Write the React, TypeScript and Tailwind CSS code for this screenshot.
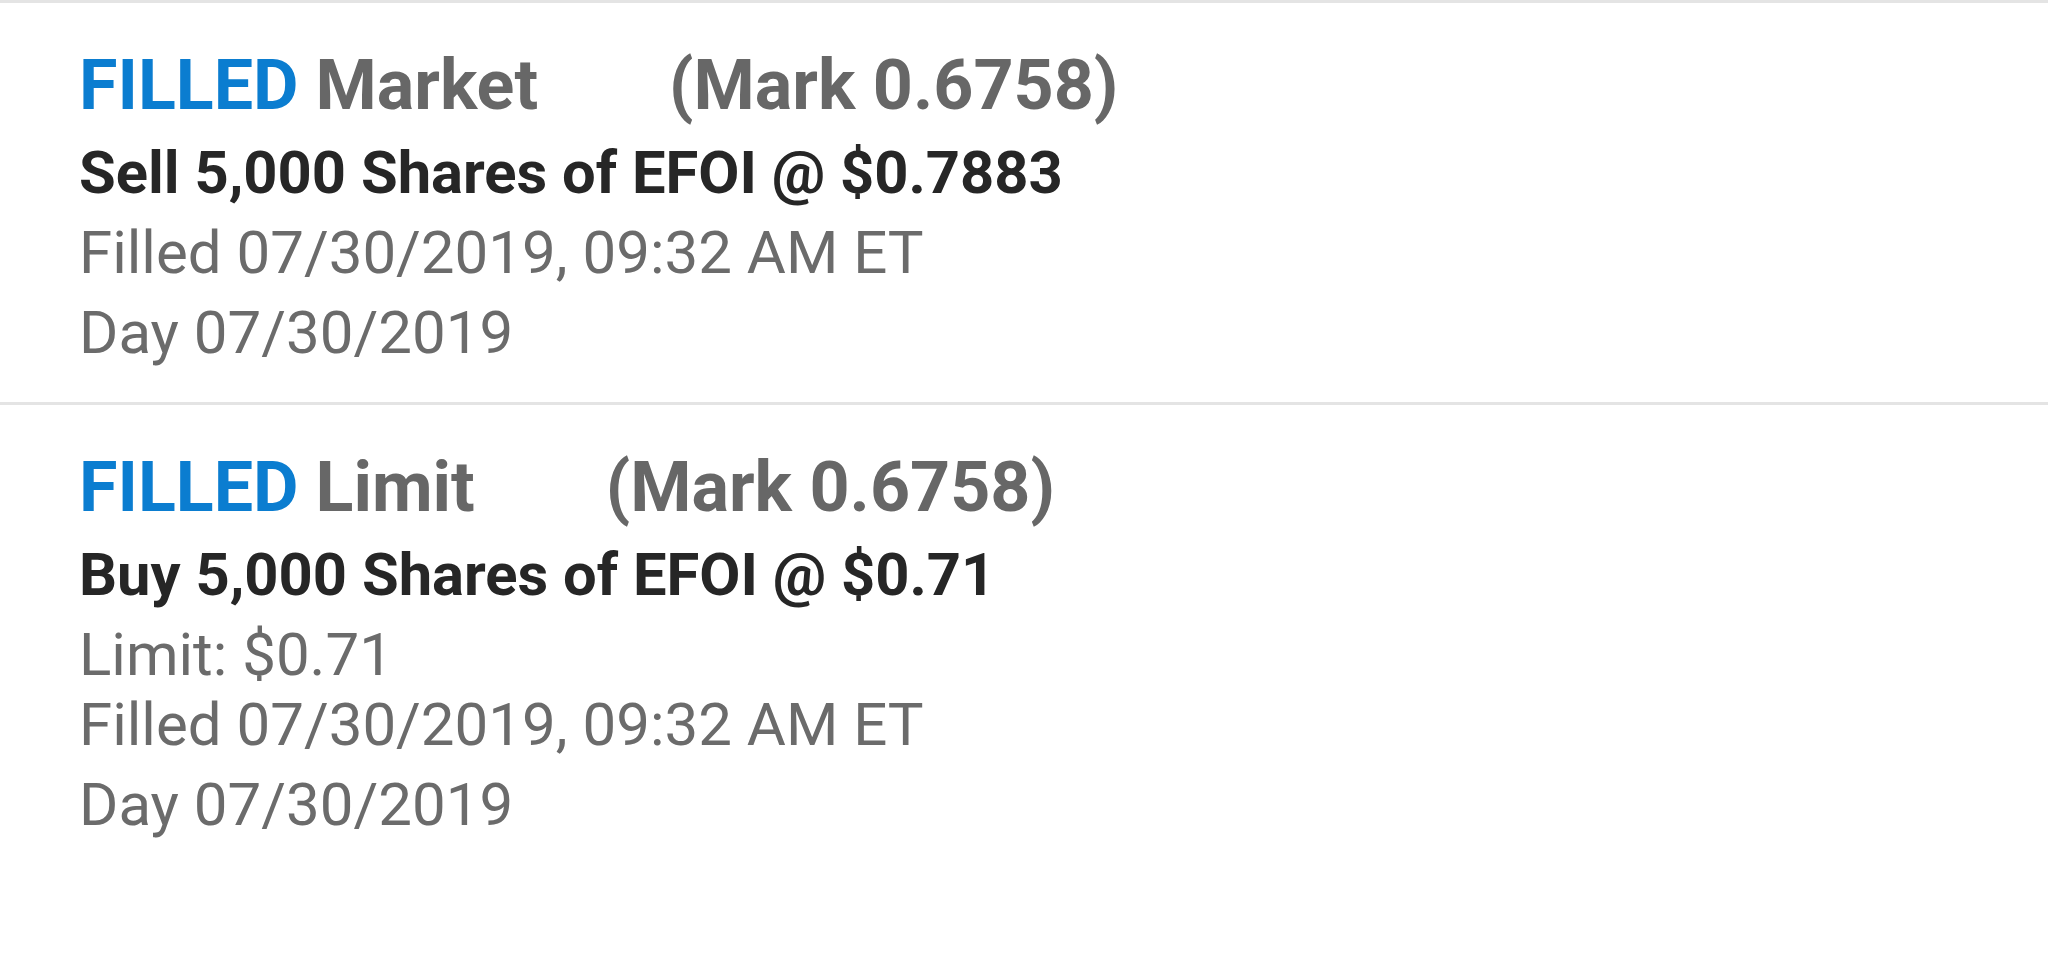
type Order = {
  type: string;
  mark: string;
  summary: string;
  limit?: string;
  filled: string;
  day: string;
};

const orders: Order[] = [
  {
    type: 'Market',
    mark: '0.6758',
    summary: 'Sell 5,000 Shares of EFOI @ $0.7883',
    filled: 'Filled 07/30/2019, 09:32 AM ET',
    day: 'Day 07/30/2019',
  },
  {
    type: 'Limit',
    mark: '0.6758',
    summary: 'Buy 5,000 Shares of EFOI @ $0.71',
    limit: 'Limit: $0.71',
    filled: 'Filled 07/30/2019, 09:32 AM ET',
    day: 'Day 07/30/2019',
  },
];

function OrderRow({ order }: { order: Order }) {
  return (
    <div className="border-t-[3px] border-[#e4e4e4] pl-[79px] pt-[42px] pb-[29px]">
      <div className="flex items-baseline text-[70px] leading-[80px] font-bold">
        <span className="text-[#0b7dd0]">FILLED</span>
        <span className="ml-[17px] text-[#676767]">{order.type}</span>
        <span className="ml-[131px] text-[#676767]">(Mark {order.mark})</span>
      </div>
      <div className="mt-[8px] text-[59.7px] leading-[80px] font-bold text-[#262626]">{order.summary}</div>
      {order.limit ? (
        <>
          <div className="mt-[5px] text-[60px] leading-[70px] text-[#6b6b6b]">
            <div>{order.limit}</div>
            <div>{order.filled}</div>
          </div>
          <div className="mt-[5px] text-[60px] leading-[80px] text-[#6b6b6b]">{order.day}</div>
        </>
      ) : (
        <>
          <div className="text-[60px] leading-[80px] text-[#6b6b6b]">{order.filled}</div>
          <div className="text-[60px] leading-[80px] text-[#6b6b6b]">{order.day}</div>
        </>
      )}
    </div>
  );
}

export default function App() {
  return (
    <div className="w-[2048px] h-[953px] overflow-hidden bg-white" style={{ fontFamily: 'Roboto, sans-serif' }}>
      {orders.map((o, i) => (
        <OrderRow key={i} order={o} />
      ))}
    </div>
  );
}
